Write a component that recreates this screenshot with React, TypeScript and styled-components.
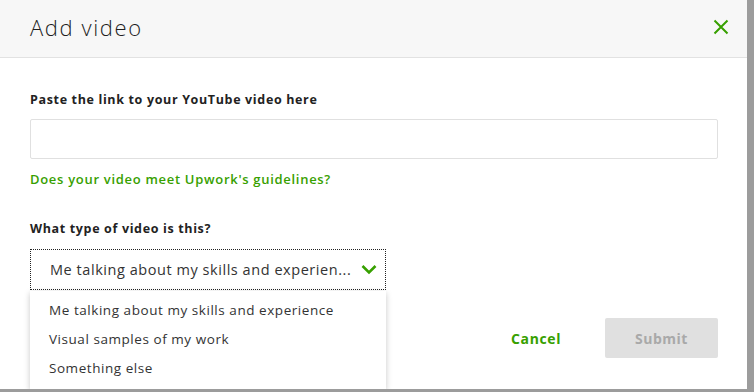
import React from 'react';
import styled, { createGlobalStyle } from 'styled-components';

const GlobalStyle = createGlobalStyle`
  html, body {
    margin: 0;
    padding: 0;
    background: #9c9c9c;
    font-family: 'Open Sans', 'Liberation Sans', sans-serif;
  }
  * {
    box-sizing: border-box;
  }
`;

const options = [
  'Me talking about my skills and experience',
  'Visual samples of my work',
  'Something else',
];

const App: React.FC = () => {
  return (
    <>
      <GlobalStyle />
      <Modal>
        <Header>
          <Title>Add video</Title>
          <CloseButton aria-label="Close">
            <svg width="16" height="16" viewBox="0 0 16 16">
              <path d="M1.5 1.5 L14.5 14.5 M14.5 1.5 L1.5 14.5" stroke="#37a000" strokeWidth="2" fill="none" />
            </svg>
          </CloseButton>
        </Header>
        <Body>
          <Label>Paste the link to your YouTube video here</Label>
          <LinkInput type="text" />
          <GreenLink>Does your video meet Upwork's guidelines?</GreenLink>
          <Label $top={32}>What type of video is this?</Label>
          <Footer>
            <SelectWrap>
              <Select>
                <SelectText>Me talking about my skills and experien...</SelectText>
                <svg width="16" height="11" viewBox="0 0 16 11">
                  <path d="M1.5 2 L8 8.5 L14.5 2" stroke="#37a000" strokeWidth="2.6" fill="none" />
                </svg>
              </Select>
              <Menu>
                {options.map((o) => (
                  <MenuItem key={o}>{o}</MenuItem>
                ))}
              </Menu>
            </SelectWrap>
            <Actions>
              <CancelButton>Cancel</CancelButton>
              <SubmitButton disabled>Submit</SubmitButton>
            </Actions>
          </Footer>
        </Body>
      </Modal>
    </>
  );
};

export default App;

const Modal = styled.div`
  width: 747px;
  height: 389px;
  background: #ffffff;
  display: flex;
  flex-direction: column;
`;

const Header = styled.div`
  height: 60px;
  background: #f7f7f7;
  border-bottom: 1px solid #e2e2e2;
  display: flex;
  align-items: center;
  justify-content: space-between;
  padding: 0 18px 3px 30px;
`;

const Title = styled.h1`
  margin: 0;
  font-family: 'Open Sans', sans-serif;
  font-weight: 300;
  font-size: 22px;
  color: #1e1e1e;
  letter-spacing: 1.6px;
`;

const CloseButton = styled.button`
  background: none;
  border: none;
  padding: 0;
  display: flex;
  cursor: pointer;
`;

const Body = styled.div`
  padding: 33px 29px 0 30px;
  display: flex;
  flex-direction: column;
`;

const Label = styled.label<{ $top?: number }>`
  font-family: 'Open Sans', sans-serif;
  font-weight: 700;
  font-size: 12.5px;
  letter-spacing: 0.65px;
  color: #222222;
  margin-top: ${(p) => p.$top ?? 0}px;
  line-height: 18px;
`;

const LinkInput = styled.input`
  margin-top: 10px;
  height: 40px;
  width: 100%;
  border: 1px solid #e0e0e0;
  border-radius: 2px;
  outline: none;
`;

const GreenLink = styled.a`
  margin-top: 11px;
  font-family: 'Open Sans', sans-serif;
  font-weight: 600;
  font-size: 13px;
  letter-spacing: 0.7px;
  color: #37a000;
  line-height: 18px;
`;

const Footer = styled.div`
  margin-top: 11px;
  display: flex;
  justify-content: space-between;
  align-items: flex-start;
`;

const SelectWrap = styled.div`
  width: 356px;
  display: flex;
  flex-direction: column;
`;

const Select = styled.div`
  height: 41px;
  border: 1px dotted #222222;
  display: flex;
  align-items: center;
  justify-content: space-between;
  padding: 0 8px 0 19px;
  background: #ffffff;
`;

const SelectText = styled.span`
  font-family: 'Open Sans', sans-serif;
  font-size: 14.5px;
  letter-spacing: 0.55px;
  color: #333333;
`;

const Menu = styled.ul`
  list-style: none;
  margin: 1px 0 0;
  padding: 5px 0 6px;
  background: #ffffff;
  box-shadow: 0 2px 6px rgba(0, 0, 0, 0.22);
`;

const MenuItem = styled.li`
  font-family: 'Open Sans', sans-serif;
  font-size: 13.5px;
  letter-spacing: 0.55px;
  color: #333333;
  height: 29px;
  line-height: 29px;
  padding-left: 19px;
`;

const Actions = styled.div`
  margin-top: 69px;
  display: flex;
  align-items: center;
  gap: 44px;
`;

const CancelButton = styled.button`
  background: none;
  border: none;
  font-family: 'Open Sans', sans-serif;
  font-weight: 700;
  font-size: 14px;
  letter-spacing: 0.6px;
  color: #37a000;
  padding: 0;
  cursor: pointer;
`;

const SubmitButton = styled.button`
  width: 113px;
  height: 40px;
  background: #e0e0e0;
  border: none;
  border-radius: 2px;
  font-family: 'Open Sans', sans-serif;
  font-weight: 700;
  font-size: 14px;
  letter-spacing: 0.5px;
  color: #a9a9a9;
`;
